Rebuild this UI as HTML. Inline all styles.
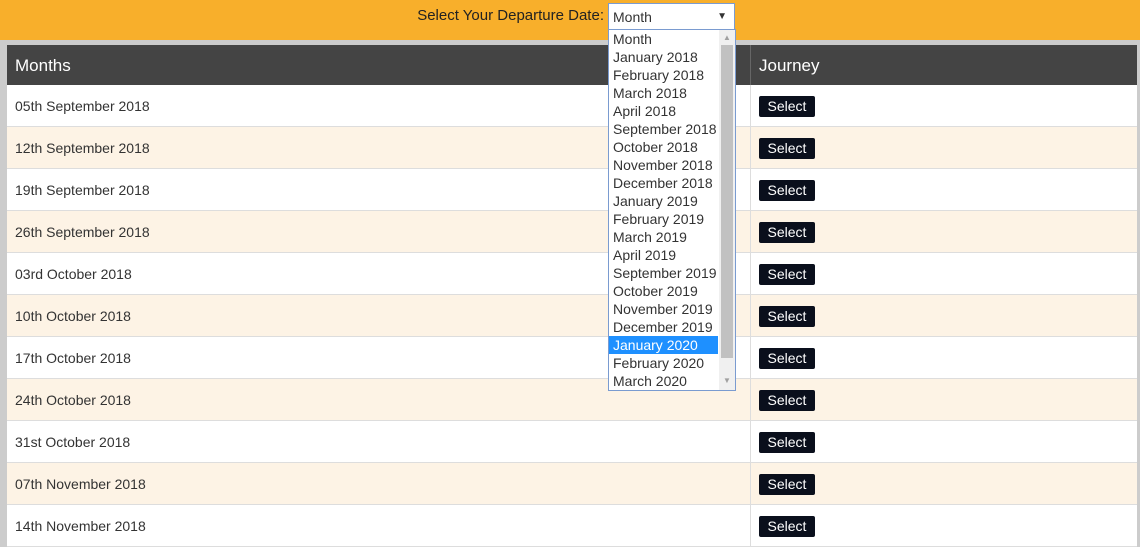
<!DOCTYPE html>
<html><head><style>
body{margin:0;width:1140px;height:547px;overflow:hidden;background:#ccc;font-family:"Liberation Sans",sans-serif;position:relative}
.top{position:absolute;left:0;top:0;width:1140px;height:40px;background:#f8af2b}
.lbl{position:absolute;right:536px;top:7px;font-size:15px;color:#222;white-space:nowrap}
.sel{position:absolute;left:608px;top:3px;background:#fff;border:1px solid #7a9bd0;font-size:14px;color:#333;box-sizing:border-box;width:127px;height:27px;padding:5px 0 0 4px}
.sel span{position:absolute;right:7px;top:7px;font-size:10px}
.tbl{position:absolute;left:7px;top:45px;width:1130px;background:#fff}
.hd{height:40px;background:#444;color:#fff;font-size:17px;position:relative}
.hd .t{position:absolute;top:11px}
.row{height:41px;border-bottom:1px solid #ddd;position:relative;font-size:14px;color:#333}
.row.c{background:#fdf3e5}
.row .d{position:absolute;left:8px;top:13px}
.vl{position:absolute;left:743px;top:0;bottom:0;width:1px;background:#ddd}
.hd .vl{background:#666}
.btn{position:absolute;left:752px;top:11px;width:56px;height:21px;background:#0a0f1c;color:#fff;border-radius:2px;text-align:center;line-height:21px;font-size:14px}
.list{position:absolute;left:608px;top:29px;width:128px;height:362px;background:#fff;border:1px solid #7a9bd0;box-sizing:border-box;font-size:14px;color:#333}
.list .o{height:18px;line-height:18px;padding-left:4px;width:105px}
.list .h{background:#1e90ff;color:#fff}
.sb{position:absolute;right:0;top:0;width:16px;height:360px;background:#f0f0f0}
.th{position:absolute;left:2px;top:15px;width:12px;height:313px;background:#c1c1c1}
.ar{position:absolute;left:4px;font-size:8px;color:#a0a0a0}
</style></head><body>
<div class="top"></div>
<div class="lbl">Select Your Departure Date:</div>
<div class="tbl">
<div class="hd"><div class="t" style="left:8px">Months</div><div class="vl"></div><div class="t" style="left:752px">Journey</div></div>
<div class="row"><div class="d">05th September 2018</div><div class="vl"></div><div class="btn">Select</div></div>
<div class="row c"><div class="d">12th September 2018</div><div class="vl"></div><div class="btn">Select</div></div>
<div class="row"><div class="d">19th September 2018</div><div class="vl"></div><div class="btn">Select</div></div>
<div class="row c"><div class="d">26th September 2018</div><div class="vl"></div><div class="btn">Select</div></div>
<div class="row"><div class="d">03rd October 2018</div><div class="vl"></div><div class="btn">Select</div></div>
<div class="row c"><div class="d">10th October 2018</div><div class="vl"></div><div class="btn">Select</div></div>
<div class="row"><div class="d">17th October 2018</div><div class="vl"></div><div class="btn">Select</div></div>
<div class="row c"><div class="d">24th October 2018</div><div class="vl"></div><div class="btn">Select</div></div>
<div class="row"><div class="d">31st October 2018</div><div class="vl"></div><div class="btn">Select</div></div>
<div class="row c"><div class="d">07th November 2018</div><div class="vl"></div><div class="btn">Select</div></div>
<div class="row"><div class="d">14th November 2018</div><div class="vl"></div><div class="btn">Select</div></div>
</div>
<div class="sel">Month<span>▼</span></div>
<div class="list">
<div class="o">Month</div><div class="o">January 2018</div><div class="o">February 2018</div><div class="o">March 2018</div><div class="o">April 2018</div><div class="o">September 2018</div><div class="o">October 2018</div><div class="o">November 2018</div><div class="o">December 2018</div><div class="o">January 2019</div><div class="o">February 2019</div><div class="o">March 2019</div><div class="o">April 2019</div><div class="o">September 2019</div><div class="o">October 2019</div><div class="o">November 2019</div><div class="o">December 2019</div><div class="o h">January 2020</div><div class="o">February 2020</div><div class="o">March 2020</div>
<div class="sb"><div class="ar" style="top:3px">▲</div><div class="th"></div><div class="ar" style="top:346px">▼</div></div>
</div>
</body></html>
